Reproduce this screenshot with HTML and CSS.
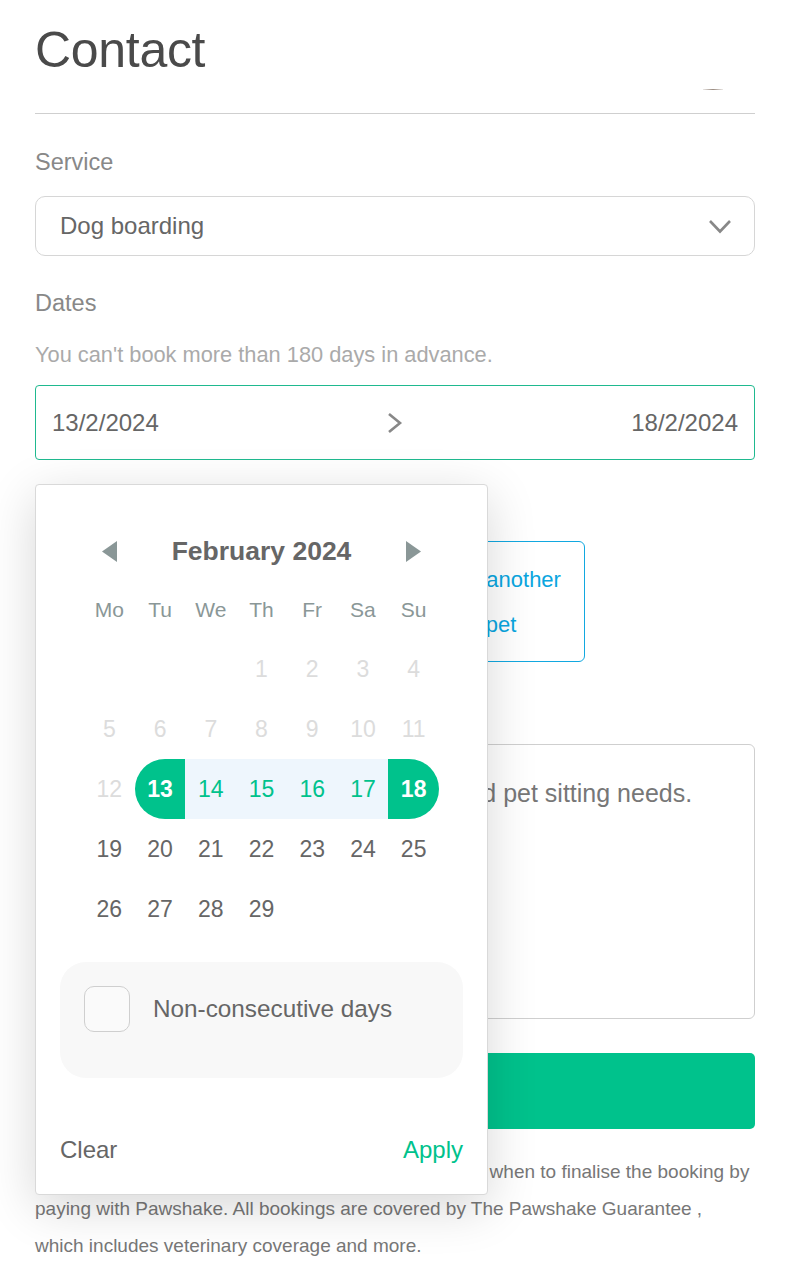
FILE: index.html
```html
<!DOCTYPE html>
<html lang="en">
<head>
<meta charset="utf-8">
<title>Contact</title>
<link rel="stylesheet" href="styles.css">
</head>
<body>
<div class="page">
  <header class="top">
    <h1 class="title">Contact</h1>
    <span class="avatar-edge"></span>
  </header>

  <section class="field">
    <div class="label">Service</div>
    <div class="select">
      <span>Dog boarding</span>
      <svg class="chev-down" width="24" height="15" viewBox="0 0 24 15"><polyline points="2,2 12,12.5 22,2" fill="none" stroke="#888" stroke-width="2.6"/></svg>
    </div>
  </section>

  <section class="field">
    <div class="label">Dates</div>
    <div class="hint">You can't book more than 180 days in advance.</div>
    <div class="range-wrap">
      <div class="range">
        <span>13/2/2024</span>
        <svg width="16" height="22" viewBox="0 0 16 22"><polyline points="2,2 13,11 2,20" fill="none" stroke="#888" stroke-width="2.6"/></svg>
        <span>18/2/2024</span>
      </div>

      <div class="picker">
        <div class="nav">
          <span class="nav-btn"><svg width="15" height="21" viewBox="0 0 15 21"><polygon points="15,0 15,21 0,10.5" fill="#8a9797"/></svg></span>
          <span class="month">February 2024</span>
          <span class="nav-btn"><svg width="15" height="21" viewBox="0 0 15 21"><polygon points="0,0 0,21 15,10.5" fill="#8a9797"/></svg></span>
        </div>
        <div class="grid weekdays">
          <span>Mo</span><span>Tu</span><span>We</span><span>Th</span><span>Fr</span><span>Sa</span><span>Su</span>
        </div>
        <div class="grid days">
          <span></span><span></span><span></span>
          <span class="off">1</span><span class="off">2</span><span class="off">3</span><span class="off">4</span>
          <span class="off">5</span><span class="off">6</span><span class="off">7</span><span class="off">8</span><span class="off">9</span><span class="off">10</span><span class="off">11</span>
          <span class="off">12</span><span class="start">13</span><span class="in">14</span><span class="in">15</span><span class="in">16</span><span class="in">17</span><span class="end">18</span>
          <span>19</span><span>20</span><span>21</span><span>22</span><span>23</span><span>24</span><span>25</span>
          <span>26</span><span>27</span><span>28</span><span>29</span><span></span><span></span><span></span>
        </div>
        <div class="nonconsec">
          <span class="checkbox"></span>
          <span class="nc-label">Non-consecutive days</span>
        </div>
        <div class="picker-foot">
          <span class="clear">Clear</span>
          <span class="apply">Apply</span>
        </div>
      </div>
    </div>
  </section>

  <section class="field pets-field">
    <div class="label">Pets</div>
    <div class="pets">
      <div class="pet-card">Buddy</div>
      <div class="pet-card">Luna</div>
      <div class="pet-card add">Add another<br>pet</div>
    </div>
  </section>

  <section class="field msg-field">
    <div class="label">Message</div>
    <div class="message">Tell us about yourself, your dogs and pet sitting needs.</div>
  </section>

  <div class="send">Send request</div>

  <p class="note">Once your dog sitter has approved, we'll let you know when to finalise the booking by paying with Pawshake. All bookings are covered by The Pawshake Guarantee , which includes veterinary coverage and more.</p>
</div>
</body>
</html>
```

FILE: styles.css
```css
* { box-sizing: border-box; }
html, body { margin: 0; padding: 0; background: #fff; }
body {
  font-family: "Liberation Sans", Arial, Helvetica, sans-serif;
  color: #666;
}
.page {
  width: 755px;
  padding-left: 35px;
}
.top {
  height: 114px;
  border-bottom: 1px solid #cfcfcf;
  display: flex;
  justify-content: space-between;
  align-items: flex-start;
  padding-top: 20px;
}
.title {
  margin: 0;
  font-size: 50px;
  line-height: 60px;
  font-weight: 400;
  color: #4a4a4a;
  letter-spacing: -0.3px;
}
.avatar-edge {
  width: 20px;
  height: 1px;
  margin-top: 69px;
  margin-right: 32px;
  background: linear-gradient(to right, rgba(150,135,125,0.2), #9a8b80, rgba(150,135,125,0.2));
}
.field { margin-top: 33px; }
.label {
  font-size: 23.5px;
  line-height: 30px;
  color: #888;
}
.select {
  margin-top: 19px;
  height: 60px;
  border: 1px solid #d6d6d6;
  border-radius: 10px;
  display: flex;
  align-items: center;
  justify-content: space-between;
  padding: 0 22px 0 24px;
  font-size: 24px;
  color: #666;
}
.chev-down { display: block; }
.field + .field { margin-top: 32px; }
.hint {
  margin-top: 22px;
  font-size: 21.8px;
  line-height: 30px;
  color: #aaa;
}
.range-wrap { position: relative; margin-top: 15px; }
.range {
  height: 75px;
  border: 1px solid #1fb98f;
  border-radius: 4px;
  display: flex;
  align-items: center;
  justify-content: space-between;
  padding: 0 16px;
  font-size: 24px;
  color: #666;
}
.range svg { display: block; }

.picker {
  position: absolute;
  z-index: 5;
  left: 0;
  top: calc(100% + 24px);
  width: 453px;
  height: 711px;
  background: #fff;
  border: 1px solid #d9d9d9;
  border-radius: 4px;
  box-shadow: 0 12px 50px rgba(0,0,0,0.16);
  padding: 36px 24px 0;
}
.nav, .grid {
  width: 355px;
  margin: 0 auto;
}
.nav {
  height: 60px;
  display: flex;
  align-items: center;
  justify-content: space-between;
}
.nav-btn {
  width: 50.7px;
  display: flex;
  justify-content: center;
}
.nav-btn svg { display: block; }
.month {
  font-size: 26.5px;
  font-weight: 700;
  color: #666;
}
.grid {
  display: grid;
  grid-template-columns: repeat(7, 1fr);
}
.weekdays { height: 58px; align-items: center; }
.weekdays span {
  text-align: center;
  font-size: 21px;
  color: #8a9797;
}
.days span {
  height: 60px;
  display: flex;
  align-items: center;
  justify-content: center;
  font-size: 23px;
  color: #666;
}
.days .off { color: #dcdcdc; }
.days .in { background: #eef6fd; color: #00c28c; }
.days .start, .days .end {
  background: #00c28c;
  color: #fff;
  font-weight: 700;
}
.days .start { border-radius: 30px 0 0 30px; }
.days .end { border-radius: 0 30px 30px 0; }

.nonconsec {
  margin-top: 23px;
  height: 116px;
  background: #f8f8f8;
  border-radius: 26px;
  padding: 24px;
  display: flex;
  align-items: flex-start;
  gap: 23px;
}
.checkbox {
  width: 46px;
  height: 46px;
  border: 1px solid #cfcfcf;
  border-radius: 10px;
  background: #fafafa;
  flex: none;
}
.nc-label {
  font-size: 24.3px;
  line-height: 46px;
  color: #666;
}
.picker-foot {
  margin-top: 52px;
  height: 40px;
  display: flex;
  align-items: center;
  justify-content: space-between;
  font-size: 24px;
}
.clear { color: #666; }
.apply { color: #00c28c; }

.pets {
  margin-top: 19px;
  display: grid;
  grid-template-columns: repeat(3, 168px);
  gap: 23px;
}
.pet-card {
  height: 121px;
  border: 1px solid #ddd;
  border-radius: 6px;
  display: flex;
  align-items: center;
  justify-content: center;
  font-size: 22px;
}
.pet-card.add {
  border-color: #12a8e0;
  color: #0aa6e0;
  text-align: center;
  line-height: 45px;
}
.msg-field .label { margin-bottom: 20px; }
.message {
  height: 275px;
  border: 1px solid #cfcfcf;
  border-radius: 6px;
  padding: 33px 24px 33px 53px;
  font-size: 25px;
  line-height: 30px;
  color: #777;
  white-space: nowrap;
  overflow: hidden;
}
.send {
  margin-top: 34px;
  height: 76px;
  border-radius: 5px;
  background: #00c28c;
  color: #fff;
  font-size: 23px;
  font-weight: 700;
  display: flex;
  align-items: center;
  justify-content: center;
}
.note {
  margin: 24px 2px 0 0;
  font-size: 19px;
  line-height: 37px;
  color: #777;
}
```
